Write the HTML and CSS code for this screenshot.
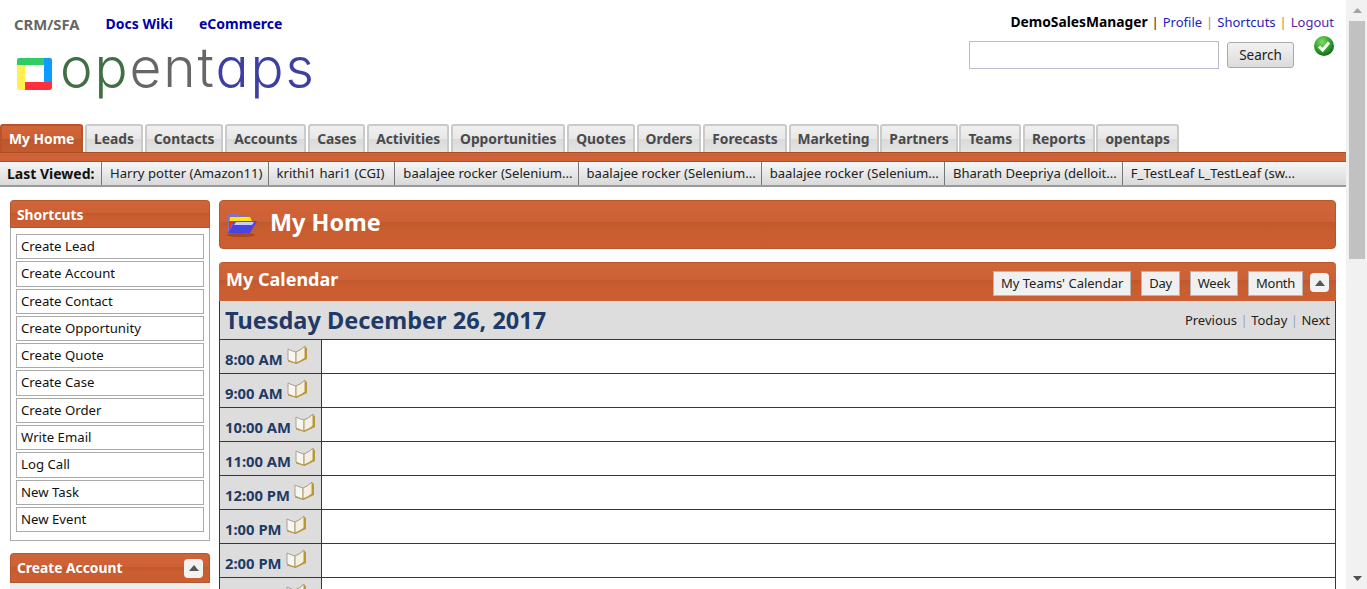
FILE: index.html
```html
<!DOCTYPE html>
<html lang="en">
<head>
<meta charset="utf-8">
<title>opentaps CRM</title>
<link rel="stylesheet" href="styles.css">
</head>
<body>
<div class="app">
  <div class="page">
    <header class="header">
      <div class="brand">
        <nav class="apps"><a class="app-current">CRM/SFA</a><a class="app-link">Docs Wiki</a><a class="app-link">eCommerce</a></nav>
        <div class="logo">
          <svg class="logo-mark" width="36" height="33" viewBox="0 0 36 33">
            <path d="M2 0H29V7H8V9H0V2Q0 0 2 0Z" fill="#2ecc62"/>
            <path d="M27 0H33Q35 0 35 2V26H27V7Z" fill="#0c9bff"/>
            <path d="M0 7H8V25H9V32H3Q0 32 0 29Z" fill="#fff04f"/>
            <path d="M8 24H35V29Q35 32 32 32H8Z" fill="#ff2f3c"/>
          </svg>
          <span class="logo-text"><span class="lg-green">op</span><span class="lg-grey">ent</span><span class="lg-blue">aps</span></span>
        </div>
      </div>
      <div class="account">
        <div class="user-links"><b>DemoSalesManager</b><i class="sep">|</i><a class="ln">Profile</a><i class="sep alt">|</i><a class="ln">Shortcuts</a><i class="sep alt">|</i><a class="ln vis">Logout</a></div>
        <div class="search-row">
          <input class="search-input" type="text" aria-label="Search">
          <button class="search-btn" type="button">Search</button>
          <svg class="ok" width="22" height="22" viewBox="0 0 22 22">
            <defs><radialGradient id="okg" cx="40%" cy="30%" r="75%"><stop offset="0" stop-color="#7fdc66"/><stop offset=".55" stop-color="#2fa32b"/><stop offset="1" stop-color="#0f5f16"/></radialGradient></defs>
            <circle cx="11" cy="11" r="10" fill="url(#okg)"/>
            <path d="M6 11.5L9.6 15L16 7.5" fill="none" stroke="#fff" stroke-width="3"/>
          </svg>
        </div>
      </div>
    </header>

    <nav class="tabs">
      <a class="tab active">My Home</a><a class="tab">Leads</a><a class="tab">Contacts</a><a class="tab">Accounts</a><a class="tab">Cases</a><a class="tab">Activities</a><a class="tab">Opportunities</a><a class="tab">Quotes</a><a class="tab">Orders</a><a class="tab">Forecasts</a><a class="tab">Marketing</a><a class="tab">Partners</a><a class="tab">Teams</a><a class="tab">Reports</a><a class="tab">opentaps</a>
    </nav>
    <div class="stripe"></div>
    <div class="recent">
      <b class="recent-label">Last Viewed:</b>
      <a class="recent-item">Harry potter (Amazon11)</a>
      <a class="recent-item wide">krithi1 hari1 (CGI)</a>
      <a class="recent-item">baalajee rocker (Selenium...</a>
      <a class="recent-item">baalajee rocker (Selenium...</a>
      <a class="recent-item">baalajee rocker (Selenium...</a>
      <a class="recent-item">Bharath Deepriya (delloit...</a>
      <a class="recent-item last">F_TestLeaf L_TestLeaf (sw...</a>
    </div>

    <div class="content">
      <aside class="sidebar">
        <section class="side-box">
          <h3 class="bar side-head">Shortcuts</h3>
          <ul class="short-list">
            <li class="short">Create Lead</li>
            <li class="short">Create Account</li>
            <li class="short">Create Contact</li>
            <li class="short">Create Opportunity</li>
            <li class="short">Create Quote</li>
            <li class="short">Create Case</li>
            <li class="short">Create Order</li>
            <li class="short">Write Email</li>
            <li class="short">Log Call</li>
            <li class="short">New Task</li>
            <li class="short">New Event</li>
          </ul>
        </section>
        <section class="side-box second">
          <h3 class="bar side-head tall">Create Account
            <span class="toggle"><svg width="10" height="6" viewBox="0 0 10 6"><path d="M0 6L5 0L10 6Z" fill="#555"/></svg></span>
          </h3>
          <div class="side-body"></div>
        </section>
      </aside>

      <main class="main">
        <div class="bar title-bar">
          <svg class="folder" width="32" height="28" viewBox="0 0 32 28">
            <ellipse cx="15" cy="25" rx="14" ry="2" fill="#a8481f"/>
            <path d="M2 6L3 3H11L13 6H22V21H2Z" fill="#8a6fc0"/>
            <path d="M4 7H24L26 11H6L3 20Z" fill="#ffe600"/>
            <path d="M3 11H25L25 14H6L3 21Z" fill="#e8301c"/>
            <path d="M9 11H31L24 23H2Z" fill="#4a45e0"/>
            <path d="M10 12H28L26 15H8Z" fill="#c8ccff"/>
          </svg>
          <h1 class="title">My Home</h1>
        </div>

        <section class="calendar">
          <div class="bar cal-head">
            <h2 class="cal-title">My Calendar</h2>
            <div class="cal-actions">
              <a class="cal-btn">My Teams' Calendar</a>
              <a class="cal-btn tight">Day</a>
              <a class="cal-btn tight">Week</a>
              <a class="cal-btn tight">Month</a>
              <span class="toggle"><svg width="10" height="6" viewBox="0 0 10 6"><path d="M0 6L5 0L10 6Z" fill="#555"/></svg></span>
            </div>
          </div>
          <div class="cal-date">
            <span class="date-text">Tuesday December 26, 2017</span>
            <span class="pager">Previous<i class="psep">|</i>Today<i class="psep">|</i>Next</span>
          </div>
          <div class="slots">
            <div class="slot"><div class="time">8:00 AM<svg class="book" width="22" height="20"><use href="#book"/></svg></div><div class="cell"></div></div>
            <div class="slot"><div class="time">9:00 AM<svg class="book" width="22" height="20"><use href="#book"/></svg></div><div class="cell"></div></div>
            <div class="slot"><div class="time">10:00 AM<svg class="book" width="22" height="20"><use href="#book"/></svg></div><div class="cell"></div></div>
            <div class="slot"><div class="time">11:00 AM<svg class="book" width="22" height="20"><use href="#book"/></svg></div><div class="cell"></div></div>
            <div class="slot"><div class="time">12:00 PM<svg class="book" width="22" height="20"><use href="#book"/></svg></div><div class="cell"></div></div>
            <div class="slot"><div class="time">1:00 PM<svg class="book" width="22" height="20"><use href="#book"/></svg></div><div class="cell"></div></div>
            <div class="slot"><div class="time">2:00 PM<svg class="book" width="22" height="20"><use href="#book"/></svg></div><div class="cell"></div></div>
            <div class="slot"><div class="time">3:00 PM<svg class="book" width="22" height="20"><use href="#book"/></svg></div><div class="cell"></div></div>
          </div>
        </section>
      </main>
    </div>
  </div>

  <div class="scrollbar">
    <span class="sb-arrow"><svg width="9" height="5" viewBox="0 0 9 5"><path d="M0 5L4.5 0L9 5Z" fill="#a3a3a3"/></svg></span>
    <span class="sb-thumb"></span>
    <span class="sb-track"></span>
    <span class="sb-arrow"><svg width="9" height="5" viewBox="0 0 9 5"><path d="M0 0L4.5 5L9 0Z" fill="#505050"/></svg></span>
  </div>
</div>

<svg class="defs" width="0" height="0">
  <symbol id="book" viewBox="0 0 22 20">
    <path d="M2 4Q6 6 10 7V18Q6 17 2 15Z" fill="#f8f6f0" stroke="#a8a294" stroke-width="1"/>
    <path d="M10 7Q15 5 19 1V13Q15 16 10 18Z" fill="#f4efe0" stroke="#a89a6e" stroke-width="1"/>
    <path d="M19 2L21 3V14L10.5 19L2 16.5V15Q6 17 10 18Q15 16 19 13Z" fill="#bd962e"/>
  </symbol>
</svg>
</body>
</html>
```
FILE: styles.css
```css
* { box-sizing: border-box; }
html, body { margin: 0; height: 589px; overflow: hidden; background: #fff; }
body { font-family: "Noto Sans", "DejaVu Sans", sans-serif; font-size: 13px; color: #111; }
h1, h2, h3, ul { margin: 0; padding: 0; }
li { list-style: none; }
i { font-style: normal; }
.defs { position: absolute; }

.app { display: flex; height: 589px; }
.page { flex: 1; min-width: 0; overflow: hidden; }

.scrollbar { width: 21px; padding-left: 1px; background: #f1f1f1; display: flex; flex-direction: column; align-items: stretch; height: 589px; }
.sb-arrow { height: 21px; display: flex; align-items: center; justify-content: center; }
.sb-thumb { height: 238px; margin: 0 2px; background: #c1c1c1; }
.sb-track { flex: 1; }

.header { height: 124px; display: flex; justify-content: space-between; }
.brand { padding: 15px 0 0 14px; }
.apps { display: flex; gap: 26px; height: 18px; line-height: 18px; font-weight: 700; font-size: 14px; }
.app-current { color: #666; font-size: 14.8px; }
.app-link { color: #0000a8; }
.logo { display: flex; align-items: flex-start; gap: 7px; margin: 4px 0 0 3px; height: 60px; white-space: nowrap; }
.logo-mark { margin-top: 21px; flex: none; }
.logo-text { font-family: "Inter", "Lato", sans-serif; font-feature-settings: "cv11" 1; font-weight: 300; font-size: 55px; line-height: 60px; letter-spacing: 1.9px; }
.lg-green { color: #3f6f43; }
.lg-grey { color: #666; }
.lg-blue { color: #3d3fa3; }

.account { width: 378px; padding: 12px 12px 0 0; display: flex; flex-direction: column; align-items: flex-end; }
.user-links { height: 20px; line-height: 20px; font-size: 13px; white-space: nowrap; }
.user-links b { color: #000; font-size: 13.8px; }
.sep { margin: 0 4px; color: #222; }
.sep.alt { color: #c88a30; }
.ln { color: #2222bb; }
.ln.vis { color: #5a1ea8; }
.search-row { display: flex; align-items: flex-start; align-self: stretch; margin: 3px -1px 0 0; }
.search-input { width: 250px; height: 28px; margin: 6px 0 0 1px; border: 1px solid #b8bccd; background: #fff; flex: none; }
.search-btn { width: 67px; height: 26px; margin: 7px 0 0 8px; border: 1px solid #a9a9a9; border-radius: 3px; background: linear-gradient(#f2f2f2, #dcdcdc); font: 13.5px "Noto Sans", sans-serif; color: #222; padding: 0; flex: none; }
.ok { margin-left: 19px; flex: none; }

.tabs { display: flex; height: 28px; gap: 1.75px; align-items: flex-end; }
.tab { height: 28px; line-height: 26px; padding: 0 7px; font-weight: 700; font-size: 13.8px; color: #4a4a4a; white-space: nowrap; border: 2px solid #cacaca; border-bottom: 0; border-radius: 3px 3px 0 0; background: linear-gradient(#f0f0f0 0, #e8e8e8 50%, #dadada 50%, #e4e4e4 100%); }
.tab.active { color: #fff; border-color: #b8552a; background: linear-gradient(#d2653a 0, #cb6034 50%, #bd582c 50%, #c45a2e 100%); }

.stripe { height: 10px; background: #cf6337; border-top: 1px solid #a85026; border-bottom: 1px solid #a85026; }
.recent { height: 25px; display: flex; align-items: stretch; line-height: 23px; font-size: 13.1px; background: linear-gradient(#f6f6f6, #d9d9d9); border-bottom: 2px solid #9a9a9a; white-space: nowrap; }
.recent-label { padding: 0 6px 0 7px; width: 102px; flex: none; color: #111; font-size: 14px; border-right: 1px solid #777; }
.recent-item { padding: 0 5px 0 8px; color: #222; border-right: 1px solid #777; }
.recent-item.wide { padding-right: 10px; }
.recent-item.last { border-right: 0; }

.content { display: flex; align-items: flex-start; padding: 13px 10px 0 10px; gap: 9px; }
.sidebar { width: 200px; flex: none; }
.bar { color: #fff; background: linear-gradient(#d1653a 0, #cd6135 45%, #bf592d 45%, #c95d30 62%, #cb5f31 100%); border-radius: 4px 4px 0 0; }
.side-head { height: 28px; line-height: 28px; padding-left: 6px; font-size: 13.8px; font-weight: 700; border: 1px solid #b8552a; border-bottom: 1px solid #a85a38; }
.side-head.tall { height: 30px; line-height: 26px; display: flex; justify-content: space-between; align-items: center; padding-right: 6px; }
.short-list { display: flex; flex-direction: column; gap: 2px; padding: 6px 5px 8px; border: 1px solid #aaa; border-top: 0; }
.short { height: 25.3px; line-height: 23px; padding-left: 4px; border: 1px solid #aaa; font-size: 13.2px; color: #111; }
.second { margin-top: 12px; }
.side-body { height: 40px; background: #eee; }
.toggle { width: 19px; height: 19px; display: flex; align-items: center; justify-content: center; background: #f2f2f2; border-radius: 4px; flex: none; }

.main { flex: 1; min-width: 0; }
.title-bar { height: 49px; display: flex; align-items: center; gap: 12px; padding: 0 0 5px 6px; border: 1px solid #b8552a; border-radius: 4px; }
.folder { flex: none; margin-top: 3px; }
.title { font-size: 23.4px; font-weight: 700; color: #fff; line-height: 40px; }

.calendar { margin-top: 13px; }
.cal-head { height: 39px; display: flex; justify-content: space-between; padding: 8px 7px 0 7px; border-top: 1px solid #b8552a; }
.cal-title { font-size: 18px; font-weight: 700; line-height: 16px; color: #fff; }
.cal-actions { display: flex; align-items: flex-start; gap: 10px; }
.cal-btn { height: 25px; line-height: 23px; padding: 0 7px; background: #f0f0f0; border: 1px solid #b5b5b5; font-size: 13px; color: #222; white-space: nowrap; }
.cal-btn.tight { letter-spacing: -.3px; }
.cal-actions .toggle { margin: 2px 0 0 -3px; }

.cal-date { height: 38px; display: flex; justify-content: space-between; align-items: center; padding: 0 5px 0 5px; background: #ddd; border: 1px solid #1f3a66; border-width: 0 1px; }
.date-text { font-size: 23.5px; font-weight: 700; color: #1f3a66; line-height: 36px; margin-top: -1px; }
.pager { font-size: 13px; color: #222; margin-top: -1px; }
.psep { margin: 0 3.5px; color: #9aa5c4; }

.slots { border: 1px solid #1f3a66; border-width: 0 1px; }
.slot { height: 34px; display: flex; border-top: 1px solid #1f3a66; }
.time { width: 102px; flex: none; background: #ddd; border-right: 1px solid #1f3a66; padding: 0 0 0 5px; display: flex; align-items: flex-start; font-size: 14.8px; font-weight: 700; color: #1f3a66; line-height: 38px; white-space: nowrap; }
.book { margin: 5px 0 0 3px; flex: none; }
.cell { flex: 1; background: #fff; }
```
